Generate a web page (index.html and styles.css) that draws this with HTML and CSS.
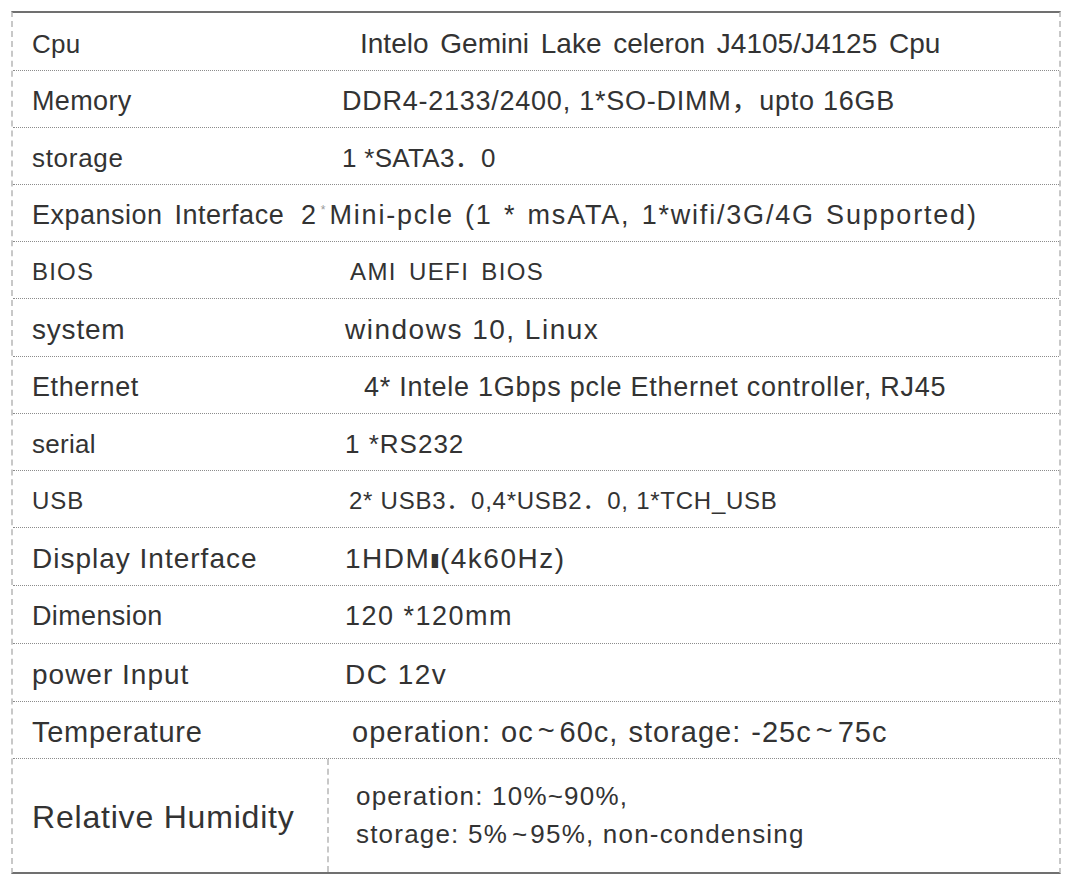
FILE: index.html
```html
<!DOCTYPE html>
<html>
<head>
<meta charset="utf-8">
<link rel="stylesheet" href="styles.css">
</head>
<body>
<div class="spec">
  <div class="row h58"><div class="lab s26 l-cpu">Cpu</div><div class="val s28 ws v-cpu">Intelo Gemini Lake celeron J4105/J4125 Cpu</div></div>
  <div class="row"><div class="lab s27 l-mem">Memory</div><div class="val s27 v-mem">DDR4-2133/2400, 1*SO-DIMM，upto 16GB</div></div>
  <div class="row"><div class="lab s26 l-sto">storage</div><div class="val s26 v-sto">1 *SATA3．0</div></div>
  <div class="row"><div class="lab s27 ws l-exp">Expansion Interface</div><div class="val s27 v-exp">2<span class="sup">*</span>Mini-pcle (1 * msATA, 1*wifi/3G/4G Supported)</div></div>
  <div class="row"><div class="lab s24 l-bios">BIOS</div><div class="val s24 ws v-bios">AMI UEFI BIOS</div></div>
  <div class="row h58"><div class="lab s28 l-sys">system</div><div class="val s28 v-sys">windows 10, Linux</div></div>
  <div class="row"><div class="lab s27 l-eth">Ethernet</div><div class="val s27 v-eth">4* Intele 1Gbps pcle Ethernet controller, RJ45</div></div>
  <div class="row"><div class="lab s26 l-ser">serial</div><div class="val s26 v-ser">1 *RS232</div></div>
  <div class="row"><div class="lab s24 l-usb">USB</div><div class="val s24 v-usb">2* USB3．0,4*USB2．0, 1*TCH_USB</div></div>
  <div class="row h58"><div class="lab s28 l-dis">Display Interface</div><div class="val s28 v-dis">1HDM<span class="blk">I</span>(4k60Hz)</div></div>
  <div class="row h58"><div class="lab s27 l-dim">Dimension</div><div class="val s27 v-dim">120 *120mm</div></div>
  <div class="row h58"><div class="lab s28 l-pow">power Input</div><div class="val s28 v-pow">DC 12v</div></div>
  <div class="row"><div class="lab s29 l-tem">Temperature</div><div class="val s29 v-tem">operation: oc<span class="tl">~</span>60c, storage: -25c<span class="tl">~</span>75c</div></div>
  <div class="row last">
    <div class="lab s32 hum-lab">Relative Humidity</div>
    <div class="val s26 hum-val">
      <div>operation: 10%~90%,</div>
      <div>storage: 5%<span class="tl2">~</span>95%, non-condensing</div>
    </div>
  </div>
</div>
</body>
</html>
```

FILE: styles.css
```css
html, body {
  margin: 0;
  padding: 0;
  background: #ffffff;
}
body {
  font-family: "Liberation Sans", Arial, "Noto Sans CJK SC", sans-serif;
  color: #333333;
}
.spec {
  margin: 11px 0 0 11px;
  width: 1050px;
  box-sizing: border-box;
  border-top: 2px solid #707070;
  border-bottom: 2px solid #707070;
  border-left: 2px dashed #c8c8c8;
  border-right: 2px dashed #c8c8c8;
}
.row {
  display: flex;
  align-items: center;
  height: 57px;
  padding-top: 4px;
  box-sizing: border-box;
  border-bottom: 1px dotted #8c8c8c;
}
.row.h58 { height: 58px; }
.row.last {
  height: 113px;
  padding-top: 0;
  border-bottom: none;
  align-items: stretch;
}
.lab {
  flex: 0 0 300px;
  width: 300px;
  box-sizing: border-box;
  padding-left: 19px;
  white-space: nowrap;
  line-height: 1;
}
.lab.l-exp { flex: 0 0 280px; width: 280px; }
.val {
  white-space: nowrap;
  line-height: 1;
}
.ws { word-spacing: 4px; }
.s24 { font-size: 24px; }
.s26 { font-size: 26px; }
.s27 { font-size: 27px; }
.s28 { font-size: 28px; }
.s29 { font-size: 29px; }
.s32 { font-size: 32px; }

.l-cpu { letter-spacing: 0.3px; }
.l-mem { letter-spacing: 0.35px; }
.l-sto { letter-spacing: 0.7px; }
.l-exp { letter-spacing: 0.5px; }
.l-bios { letter-spacing: 1.2px; }
.l-sys { letter-spacing: 0.8px; }
.l-eth { letter-spacing: 0.6px; }
.l-ser { letter-spacing: 0.3px; }
.l-usb { letter-spacing: 1px; }
.l-dis { letter-spacing: 1px; }
.l-dim { letter-spacing: 0.35px; }
.l-pow { letter-spacing: 1px; }
.l-tem { letter-spacing: 0.7px; }

.v-cpu { padding-left: 47px; }
.v-mem { padding-left: 29px; letter-spacing: 0.75px; }
.v-sto { padding-left: 29px; letter-spacing: 0.3px; }
.v-exp { padding-left: 8px; letter-spacing: 1.8px; word-spacing: 2px; }
.v-bios { padding-left: 37px; letter-spacing: 1.4px; }
.v-sys { padding-left: 32px; letter-spacing: 1.5px; }
.v-eth { padding-left: 51px; letter-spacing: 0.75px; }
.v-ser { padding-left: 32px; letter-spacing: 1px; }
.v-usb { padding-left: 36px; letter-spacing: 0.75px; }
.v-dis { padding-left: 32px; letter-spacing: 1.5px; }
.v-dim { padding-left: 32px; letter-spacing: 1.5px; }
.v-pow { padding-left: 32px; letter-spacing: 1.5px; }
.v-tem { padding-left: 39px; letter-spacing: 1px; word-spacing: 1px; }

.tl {
  display: inline-block;
  margin: 0 4px;
  position: relative;
  top: -2px;
}
.tl2 {
  display: inline-block;
  margin: 0 2px 0 4px;
}

.sup {
  font-size: 12px;
  color: #999999;
  vertical-align: 10px;
  letter-spacing: 0;
  padding: 0 4px 0 3px;
}
.blk {
  display: inline-block;
  font-weight: bold;
  font-size: 20px;
  letter-spacing: 0;
  transform: scaleX(2.2);
  margin: 0 2px 0 2px;
}
.hum-lab {
  display: flex;
  align-items: center;
  flex: 0 0 316px;
  width: 316px;
  letter-spacing: 0.8px;
  border-right: 2px dashed #c8c8c8;
  padding-top: 3px;
}
.hum-val {
  display: flex;
  flex-direction: column;
  justify-content: center;
  gap: 12px;
  padding-left: 27px;
  padding-bottom: 2px;
  letter-spacing: 1.2px;
}
```
